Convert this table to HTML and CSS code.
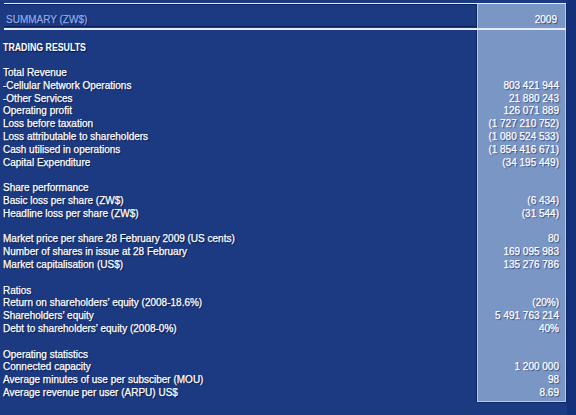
FILE: index.html
```html
<!DOCTYPE html>
<html>
<head>
<meta charset="utf-8">
<link rel="stylesheet" href="styles.css">
</head>
<body>
<div class="page">
  <div class="sheet">
    <div class="colbg"></div>
    <div class="head">
      <div class="head-label">SUMMARY (ZW$)</div>
      <div class="head-year">2009</div>
    </div>
    <div class="labels">
      <div class="title"><span class="title-text">TRADING RESULTS</span></div>
      <div class="rows">
        <div class="row">Total Revenue</div>
        <div class="row">-Cellular Network Operations</div>
        <div class="row">-Other Services</div>
        <div class="row">Operating profit</div>
        <div class="row">Loss before taxation</div>
        <div class="row">Loss attributable to shareholders</div>
        <div class="row">Cash utilised in operations</div>
        <div class="row">Capital Expenditure</div>
        <div class="row"></div>
        <div class="row">Share performance</div>
        <div class="row">Basic loss per share (ZW$)</div>
        <div class="row">Headline loss per share (ZW$)</div>
        <div class="row"></div>
        <div class="row">Market price per share 28 February 2009 (US cents)</div>
        <div class="row">Number of shares in issue at 28 February</div>
        <div class="row">Market capitalisation (US$)</div>
        <div class="row"></div>
        <div class="row">Ratios</div>
        <div class="row">Return on shareholders’ equity (2008-18.6%)</div>
        <div class="row">Shareholders’ equity</div>
        <div class="row">Debt to shareholders’ equity (2008-0%)</div>
        <div class="row"></div>
        <div class="row">Operating statistics</div>
        <div class="row">Connected capacity</div>
        <div class="row">Average minutes of use per subsciber (MOU)</div>
        <div class="row">Average revenue per user (ARPU) US$</div>
      </div>
    </div>
    <div class="values">
      <div class="rows">
        <div class="row"></div>
        <div class="row">803 421 944</div>
        <div class="row">21 880 243</div>
        <div class="row">126 071 889</div>
        <div class="row">(1 727 210 752)</div>
        <div class="row">(1 080 524 533)</div>
        <div class="row">(1 854 416 671)</div>
        <div class="row">(34 195 449)</div>
        <div class="row"></div>
        <div class="row"></div>
        <div class="row">(6 434)</div>
        <div class="row">(31 544)</div>
        <div class="row"></div>
        <div class="row">80</div>
        <div class="row">169 095 983</div>
        <div class="row">135 276 786</div>
        <div class="row"></div>
        <div class="row"></div>
        <div class="row">(20%)</div>
        <div class="row">5 491 763 214</div>
        <div class="row">40%</div>
        <div class="row"></div>
        <div class="row"></div>
        <div class="row">1 200 000</div>
        <div class="row">98</div>
        <div class="row">8.69</div>
      </div>
    </div>
  </div>
</div>
</body>
</html>
```

FILE: styles.css
```css
html, body {
  margin: 0;
  padding: 0;
}
body {
  background: #15307a;
  width: 576px;
  height: 415px;
  overflow: hidden;
  font-family: "Liberation Sans", Arial, sans-serif;
  color: #ffffff;
}
.page {
  width: 567px;
  height: 415px;
  background: #1c3a82;
}
.sheet {
  display: grid;
  grid-template-columns: 477px 89px;
  grid-template-rows: 27px auto;
  padding-top: 3px;
}
.colbg {
  grid-column: 2;
  grid-row: 1 / 3;
  height: 399px;
  box-sizing: border-box;
  background: #7a96c5;
  border: 1px solid #b9c8e4;
  box-shadow: 1px 1px 0 #0f2865, -1px 0 0 #0f2865;
}
.head {
  grid-column: 1 / 3;
  grid-row: 1;
  margin-left: 4px;
  display: grid;
  grid-template-columns: 473px 89px;
  border-top: 1px solid #e6ecf6;
  border-bottom: 2px solid #e6ecf6;
  z-index: 1;
}
.head-label {
  border-top: 1px solid #0b1f5c;
  border-bottom: 1px solid #0b1f5c;
  box-sizing: border-box;
  font-size: 10px;
  line-height: 29px;
  height: 23px;
  padding-left: 2px;
  color: #8eaae4;
  -webkit-text-stroke: 0.25px #8eaae4;
  text-shadow: 1px 1px 1px #0b1d55;
}
.head-year {
  text-align: right;
  padding-right: 9px;
  font-size: 10px;
  line-height: 31px;
  height: 23px;
  -webkit-text-stroke: 0.25px #ffffff;
  text-shadow: 1px 1px 1px #1c2f66;
}
.labels {
  grid-column: 1;
  grid-row: 2;
  padding-left: 3px;
  z-index: 1;
}
.title {
  margin-top: 10px;
  font-weight: bold;
  font-size: 11px;
  line-height: 14px;
  margin-bottom: 13px;
  text-shadow: 1px 1px 1px #08143e;
}
.title-text {
  display: inline-block;
  transform: scaleX(0.8);
  transform-origin: left center;
}
.values {
  grid-column: 2;
  grid-row: 2;
  padding-top: 37px;
  padding-right: 7px;
  text-align: right;
  z-index: 1;
}
.rows {
  font-size: 10px;
  -webkit-text-stroke: 0.25px #ffffff;
  text-shadow: 1px 1px 1px #08143e;
}
.row {
  height: 12.8px;
  line-height: 12.8px;
  white-space: nowrap;
}
.values .row {
  text-shadow: 1px 1px 1px #253c78;
}
```
